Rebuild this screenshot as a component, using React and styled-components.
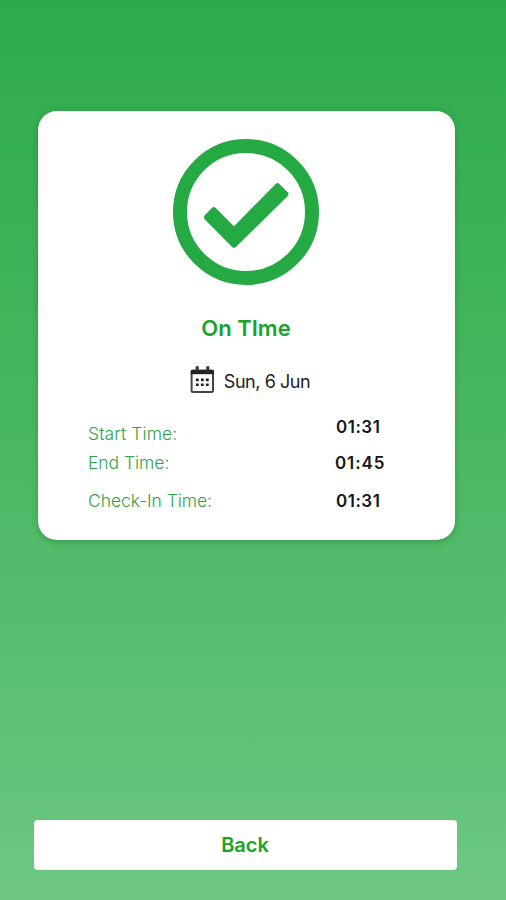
import styled, { createGlobalStyle } from 'styled-components';

const times = [
  { label: 'Start Time:', value: '01:31', height: 36, drop: 7, labelSpacing: 0.1 },
  { label: 'End Time:', value: '01:45', height: 38, indent: -1, spacing: 0.9 },
  { label: 'Check-In Time:', value: '01:31', height: 20 },
];

const App = () => {
  return (
    <Screen>
      <GlobalStyle />
      <Card>
        <CheckIcon width="146" height="146" viewBox="0 0 146 146">
          <circle cx="73" cy="73" r="66" fill="none" stroke="#25a943" strokeWidth="14" />
          <path
            d="M34 78.3 L40.7 71.2 L61 91.5 L104.5 47.3 L112.4 55.1 L61 105.7 Z"
            fill="#25a943"
            stroke="#25a943"
            strokeWidth="6"
            strokeLinejoin="round"
          />
        </CheckIcon>
        <Status>On TIme</Status>
        <DateRow>
          <CalendarIcon />
          <DateText>Sun, 6 Jun</DateText>
        </DateRow>
        <TimeList>
          {times.map((item) => (
            <TimeRow key={item.label} $height={item.height}>
              <Label $drop={item.drop} $spacing={item.labelSpacing}>{item.label}</Label>
              <Value $indent={item.indent} $spacing={item.spacing}>{item.value}</Value>
            </TimeRow>
          ))}
        </TimeList>
      </Card>
      <BackButton type="button">Back</BackButton>
    </Screen>
  )
}

const CalendarIcon = () => (
  <svg width="24" height="28" viewBox="0 0 24 28">
    <rect x="1.6" y="4.5" width="21.4" height="21.6" rx="1.5" fill="#fff" stroke="#444" strokeWidth="2" />
    <path d="M.8 4h23v4.2H.8z" fill="#222" />
    <path d="M7.2 .2v5M17.8 .2v5" stroke="#333" strokeWidth="3" />
    <path d="M5.9 13.9h13M5.9 18.7h13" stroke="#222" strokeWidth="2.6" strokeDasharray="2.8 2.2" />
  </svg>
)

const GlobalStyle = createGlobalStyle`
  body {
    margin: 0;
    font-family: Inter, sans-serif;
  }
`

const Screen = styled.div`
  box-sizing: border-box;
  display: flex;
  flex-direction: column;
  justify-content: space-between;
  height: 900px;
  padding: 111px 49px 30px 34px;
  background: linear-gradient(#2dab4a, #4db965 55%, #6dc783);
`

const Card = styled.div`
  box-sizing: border-box;
  display: flex;
  flex-direction: column;
  align-items: center;
  height: 429px;
  margin: 0 2px 0 4px;
  padding-top: 28px;
  border-radius: 19px;
  background-color: #fff;
  box-shadow: 0 2px 6px rgba(0, 80, 20, 0.3);
`

const CheckIcon = styled.svg`
  margin-right: 1px;
`

const Status = styled.h1`
  margin: 29px 1px 0 0;
  color: #18a32b;
  font-size: 22px;
  font-weight: 600;
  line-height: 28px;
`

const DateRow = styled.div`
  display: flex;
  align-items: center;
  gap: 10px;
  height: 30px;
  margin: 23px 0 0 7px;
`

const DateText = styled.span`
  color: #222;
  font-size: 18px;
  letter-spacing: -0.45px;
  padding-top: 3px;
`

const TimeList = styled.div`
  box-sizing: border-box;
  width: 100%;
  margin-top: 22px;
  padding-left: 50px;
  line-height: 20px;
`

const TimeRow = styled.div`
  display: grid;
  grid-template-columns: 248px 1fr;
  align-items: start;
  height: ${(props) => props.$height}px;
`

const Label = styled.span`
  margin-top: ${(props) => props.$drop || 0}px;
  color: #2fa347;
  font-size: 17.5px;
  font-weight: 300;
  letter-spacing: ${(props) => props.$spacing || -0.05}px;
`

const Value = styled.span`
  margin-left: ${(props) => props.$indent || 0}px;
  color: #161616;
  font-size: 17px;
  font-weight: 600;
  letter-spacing: ${(props) => props.$spacing || 0.5}px;
`

const BackButton = styled.button`
  height: 50px;
  padding: 0 7px 0 6px;
  border: none;
  border-radius: 4px;
  color: #18a32b;
  background-color: #fff;
  font-family: inherit;
  font-size: 20px;
  font-weight: 600;
  cursor: pointer;
`

export default App;
